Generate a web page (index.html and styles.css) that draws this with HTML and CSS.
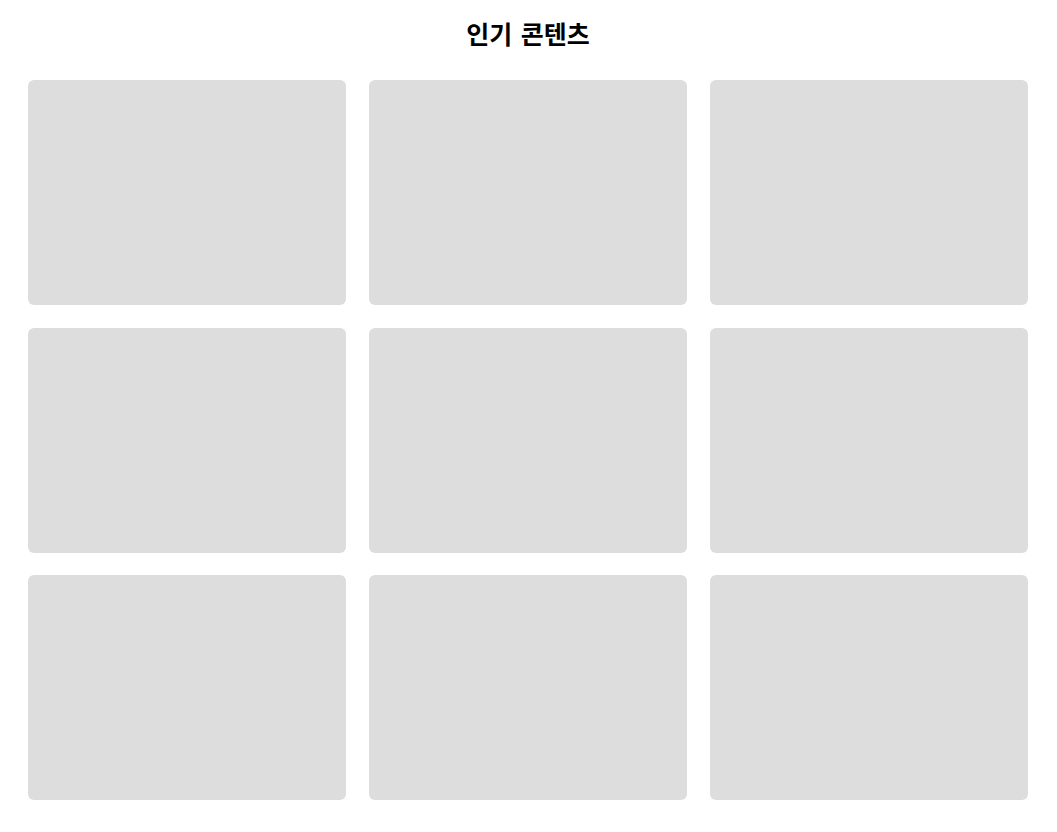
FILE: index.html
```html
<!DOCTYPE html>
<html lang="ko">
<head>
    <meta charset="utf-8">
    <meta name="viewport" content="width=device-width,initial-scale=1">
    <title>인기 콘텐츠</title>
    <link rel="stylesheet" href="styles.css">
</head>
<body>
    <div class="page">
        <h2 class="title">인기 콘텐츠</h2>
        <div class="grid">
            <div class="card"></div>
            <div class="card"></div>
            <div class="card"></div>
            <div class="card"></div>
            <div class="card"></div>
            <div class="card"></div>
            <div class="card"></div>
            <div class="card"></div>
            <div class="card"></div>
        </div>
    </div>
</body>
</html>
```
FILE: styles.css
```css
body {
    margin: 0;
    background: #ffffff;
    color: #000000;
    font-family: "DejaVu Sans", "Noto Sans CJK KR", sans-serif;
}

.page {
    width: 1000px;
    margin: 0 28px;
    padding: 20px 0;
}

.title {
    margin: 0 0 28px;
    font-size: 25px;
    line-height: 32px;
    text-align: center;
}

.grid {
    display: grid;
    grid-template-columns: repeat(3, 1fr);
    gap: 22.5px 23px;
}

.card {
    height: 225px;
    background: #dddddd;
    border-radius: 6px;
}
```
